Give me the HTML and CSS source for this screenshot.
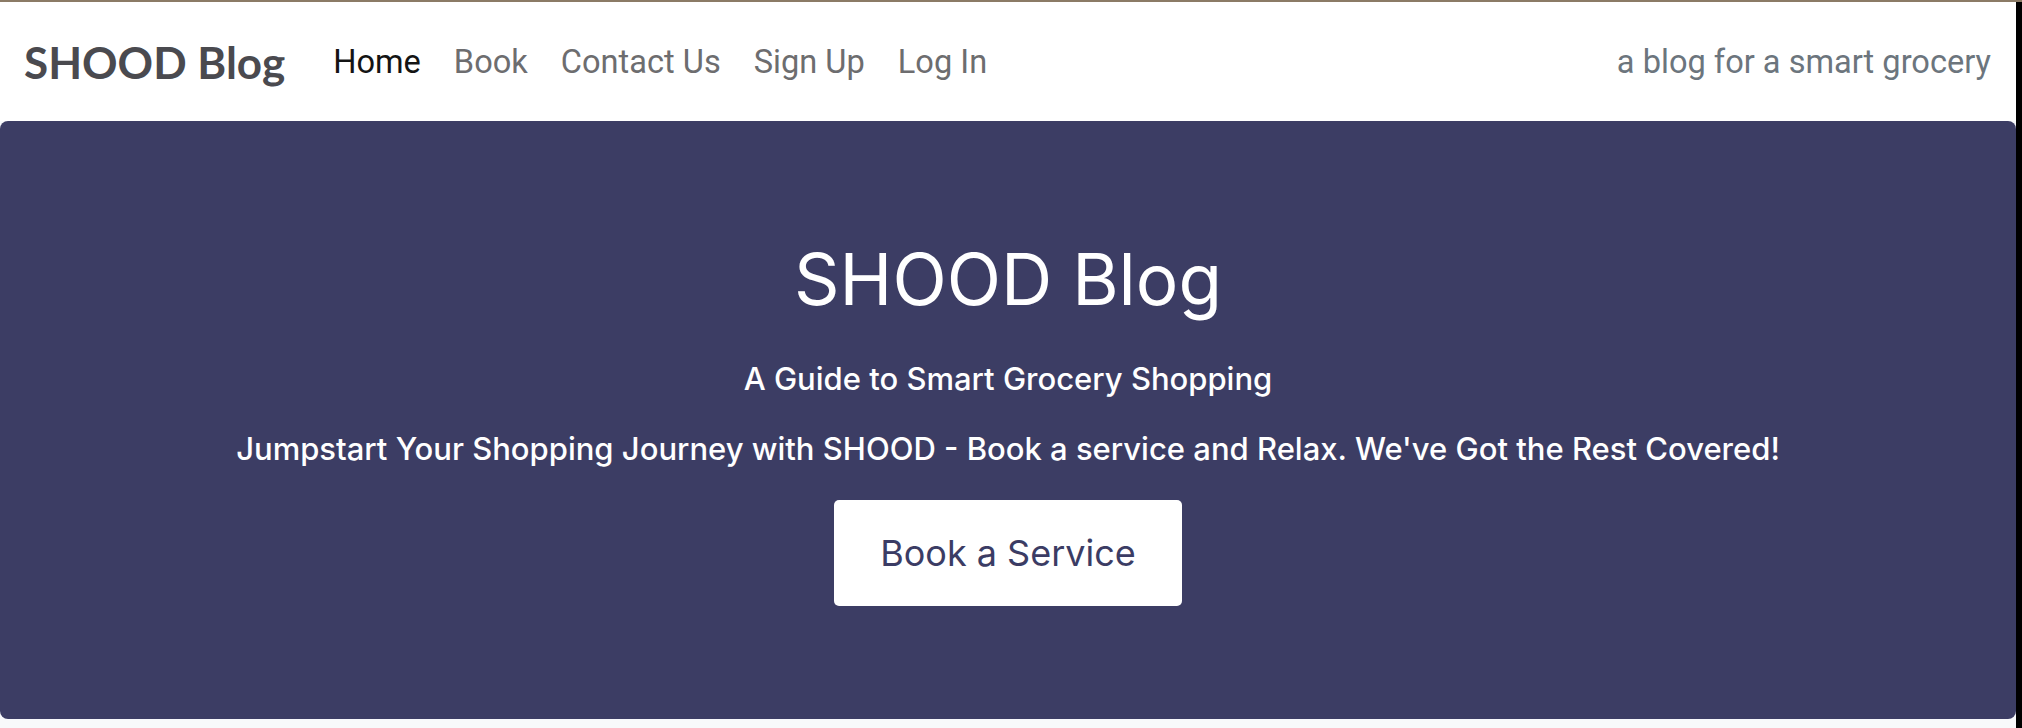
FILE: index.html
```html
<!DOCTYPE html>
<html lang="en">
<head>
<meta charset="utf-8">
<title>SHOOD Blog</title>
<link rel="stylesheet" href="styles.css">
</head>
<body>
<div class="page">
  <div class="main">
    <nav class="navbar">
      <a class="brand" href="#">SHOOD Blog</a>
      <ul class="nav-links">
        <li><a class="active" href="#">Home</a></li>
        <li><a href="#">Book</a></li>
        <li><a href="#">Contact Us</a></li>
        <li><a href="#">Sign Up</a></li>
        <li><a href="#">Log In</a></li>
      </ul>
      <span class="tagline">a blog for a smart grocery</span>
    </nav>
    <section class="hero">
      <h1 class="hero-title">SHOOD Blog</h1>
      <p class="hero-lead">A Guide to Smart Grocery Shopping</p>
      <p class="hero-text">Jumpstart Your Shopping Journey with SHOOD - Book a service and Relax. We've Got the Rest Covered!</p>
      <a class="hero-btn" href="#">Book a Service</a>
    </section>
  </div>
  <div class="edge"></div>
</div>
</body>
</html>
```

FILE: styles.css
```css
* { box-sizing: border-box; }
html, body { margin: 0; padding: 0; }
body {
  background: #f8f9fb;
  font-family: Inter, "Noto Sans", sans-serif;
  border-top: 2px solid #8b7b66;
  height: 728px;
  overflow: hidden;
}
.page {
  display: flex;
  height: 726px;
}
.main {
  flex: 1;
  display: flex;
  flex-direction: column;
}
.edge {
  width: 6px;
  background: #000;
}
.navbar {
  height: 119px;
  background: #fff;
  display: flex;
  align-items: center;
  padding: 0 25px 0 24px;
}
.brand {
  font-family: Lato, sans-serif;
  font-weight: 700;
  font-size: 44px;
  color: #4a4a4f;
  text-decoration: none;
  margin-right: 48px;
}
.nav-links {
  list-style: none;
  margin: 0;
  padding: 0;
  display: flex;
  gap: 33px;
  flex: 1;
}
.nav-links a {
  font-family: Roboto, Inter, sans-serif;
  font-size: 32.6px;
  color: #6d6d6f;
  text-decoration: none;
}
.nav-links a.active { color: #141414; }
.tagline {
  font-family: Roboto, Inter, sans-serif;
  font-size: 32.6px;
  color: #6c757d;
}
.hero {
  height: 598px;
  background: #3c3d64;
  border-radius: 8px;
  display: flex;
  flex-direction: column;
  align-items: center;
  padding-top: 116px;
  color: #fff;
  text-align: center;
}
.hero-title {
  margin: 0;
  font-size: 71px;
  line-height: 1.2;
  font-weight: 400;
}
.hero-lead {
  margin: 38px 0 0;
  font-size: 31px;
  line-height: 1.2;
  font-weight: 500;
}
.hero-text {
  margin: 33px 0 0;
  font-size: 31px;
  line-height: 1.2;
  font-weight: 500;
}
.hero-btn {
  margin-top: 32px;
  width: 348px;
  height: 106px;
  background: #fff;
  border-radius: 5px;
  color: #3b3c64;
  font-size: 36px;
  text-decoration: none;
  display: flex;
  align-items: center;
  justify-content: center;
}
```
